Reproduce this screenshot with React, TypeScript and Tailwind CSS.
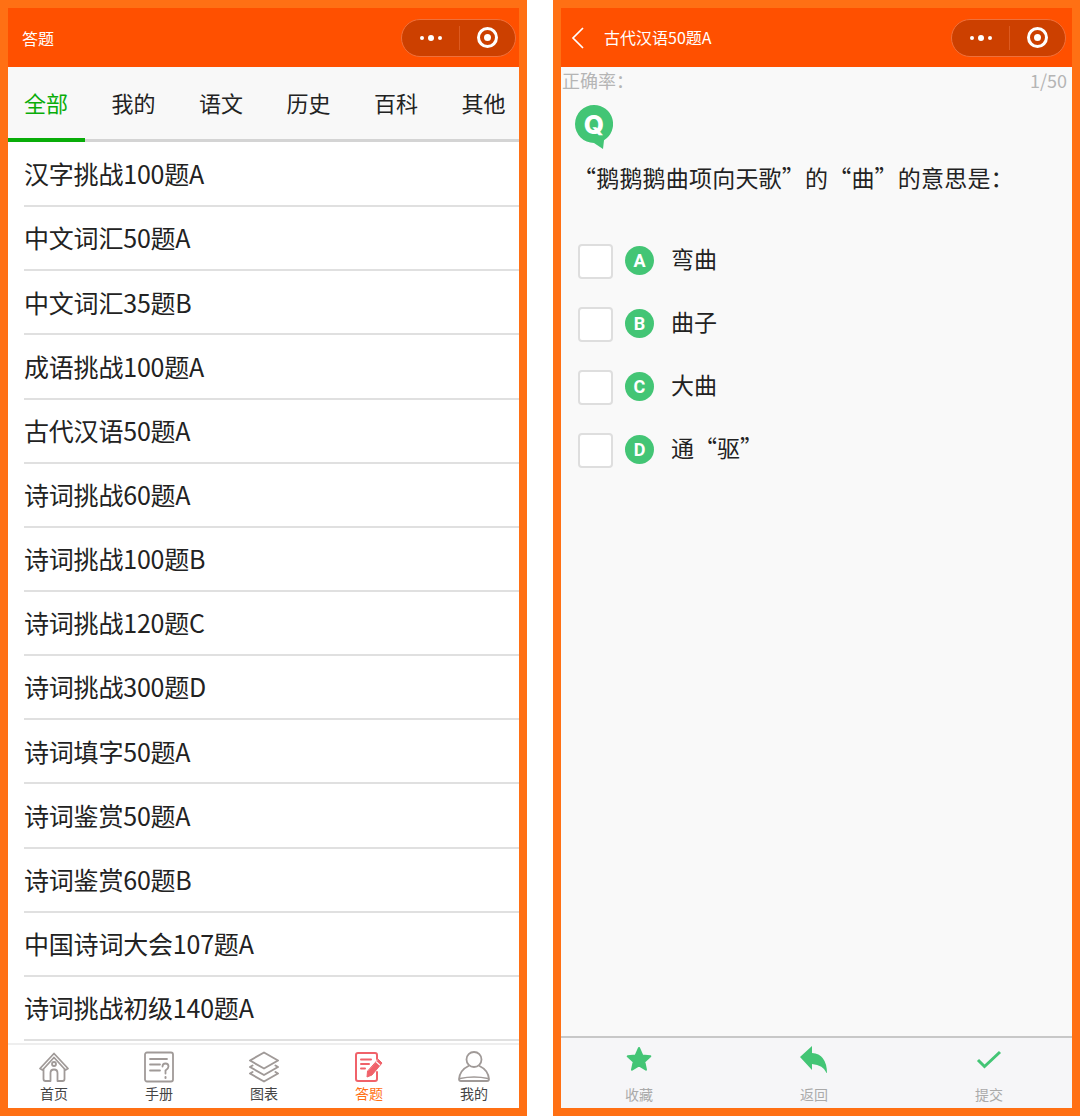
import { ReactNode } from 'react'

const cjk = "font-['Noto_Sans_CJK_SC','Noto_Sans',sans-serif]"

const tabs = ['全部', '我的', '语文', '历史', '百科', '其他']

const quizzes = [
  '汉字挑战100题A',
  '中文词汇50题A',
  '中文词汇35题B',
  '成语挑战100题A',
  '古代汉语50题A',
  '诗词挑战60题A',
  '诗词挑战100题B',
  '诗词挑战120题C',
  '诗词挑战300题D',
  '诗词填字50题A',
  '诗词鉴赏50题A',
  '诗词鉴赏60题B',
  '中国诗词大会107题A',
  '诗词挑战初级140题A',
]

const options = [
  { letter: 'A', text: '弯曲' },
  { letter: 'B', text: '曲子' },
  { letter: 'C', text: '大曲' },
  { letter: 'D', text: '通“驱”' },
]

function Capsule() {
  return (
    <div className="flex h-[38px] w-[115px] items-center rounded-full border border-[#f0703a] bg-[#cc4000]">
      <div className="flex w-[57px] items-center justify-center gap-[4px]">
        <span className="size-[4px] rounded-full bg-white" />
        <span className="size-[6px] rounded-full bg-white" />
        <span className="size-[4px] rounded-full bg-white" />
      </div>
      <div className="h-[24px] w-px bg-[#dd5a20]" />
      <div className="flex flex-1 items-center justify-center">
        <div className="flex size-[21px] items-center justify-center rounded-full border-[3px] border-white">
          <span className="size-[7px] rounded-full bg-white" />
        </div>
      </div>
    </div>
  )
}

function Phone({ children }: { children: ReactNode }) {
  return (
    <div className={`flex h-[1116px] w-[527px] flex-col overflow-hidden border-8 border-[#ff7014] ${cjk}`}>
      {children}
    </div>
  )
}

function HomeIcon() {
  return (
    <svg width="32" height="32" viewBox="0 0 32 32" fill="none" stroke="#a09a98" strokeWidth="1.8" strokeLinejoin="round" strokeLinecap="round">
      <path d="M2 17.500 16 2.500l14 15-2.500 1.500L16 6.500 4.500 19Z" />
      <path d="M5.500 18.500V28q0 2 2 2h5v-8q0-3.500 3.500-3.500t3.500 3.500v8h5q2 0 2-2V18.500" />
      <circle cx="16" cy="13" r="2" />
    </svg>
  )
}

function ManualIcon() {
  return (
    <svg width="30" height="32" viewBox="0 0 30 32" fill="none" stroke="#a09a98" strokeWidth="1.8" strokeLinecap="round">
      <rect x="1" y="1.500" width="28" height="29" rx="2" />
      <path d="M6 8h17M6 13.500h10M6 19.500h10" />
      <path d="M18.500 15.500q0-3 3-3t3 3q0 2-3 4v3" />
      <path d="M21.500 26v1" strokeWidth="2" />
    </svg>
  )
}

function LayersIcon() {
  return (
    <svg width="32" height="32" viewBox="0 0 32 32" fill="none" stroke="#a09a98" strokeWidth="2" strokeLinejoin="round" strokeLinecap="round">
      <path d="M16 1.500 30 9.500 16 17.500 2 9.500Z" />
      <path d="M4.500 14.500 2 16l14 8 14-8-2.500-1.500" />
      <path d="M4.500 21 2 22.500l14 8 14-8-2.500-1.500" />
    </svg>
  )
}

function QuizIcon() {
  return (
    <svg width="28" height="30" viewBox="0 0 28 30" fill="none" stroke="#f0626a" strokeWidth="2" strokeLinecap="round" strokeLinejoin="round">
      <path d="M22 7V3q0-2-2-2H3Q1 1 1 3v24q0 2 2 2h17q2 0 2-2v-7" />
      <path d="M6 7.500h10M6 12h8M6 16.500h4" />
      <path d="M23.500 7.500 27 11 17 23l-5 2 .5-5.500Z" fill="#f0626a" stroke="#f0626a" strokeWidth="1" />
      <path d="M21.500 10l3 2.800" stroke="#fff" strokeWidth="1.200" />
    </svg>
  )
}

function UserIcon() {
  return (
    <svg width="32" height="32" viewBox="0 0 32 32" fill="none" stroke="#a09a98" strokeWidth="1.8" strokeLinecap="round">
      <circle cx="16" cy="8.500" r="7.500" />
      <path d="M10.500 15q-8.500 4-9.500 13q0 2 2 2h26q2 0 2-2q-1-9-9.500-13" />
      <path d="M2 27.500q14-3 28 0" strokeWidth="1.400" />
    </svg>
  )
}

const navItems = [
  { label: '首页', icon: <HomeIcon />, active: false },
  { label: '手册', icon: <ManualIcon />, active: false },
  { label: '图表', icon: <LayersIcon />, active: false },
  { label: '答题', icon: <QuizIcon />, active: true },
  { label: '我的', icon: <UserIcon />, active: false },
]

function ListPage() {
  return (
    <Phone>
      <div className="flex h-[59px] shrink-0 items-center justify-between bg-[#ff5000] pl-[14px] pr-[3px]">
        <span className="text-[16px] text-white">答题</span>
        <Capsule />
      </div>
      <div className="flex h-[75px] shrink-0 gap-[10.5px] border-b-[3px] border-[#d4d4d4] bg-[#f8f8f8]">
        {tabs.map((t, i) => (
          <div
            key={t}
            className={`-mb-[3px] flex h-[75px] w-[77px] shrink-0 items-center justify-center pr-[1px] text-[22px] ${
              i === 0 ? 'border-b-[4px] border-[#09ad09] pb-[1px] text-[#09ad09]' : 'pb-[5px] text-[#222]'
            }`}
          >
            {t}
          </div>
        ))}
      </div>
      <div className="min-h-0 flex-1 overflow-hidden bg-white pl-[16px] pt-[1px]">
        {quizzes.map((q) => (
          <div key={q} className="flex h-[64.15px] items-center border-b-2 border-[#e0e0e0] text-[25px] tracking-[-0.2px] text-[#222]">
            {q}
          </div>
        ))}
      </div>
      <div className="flex h-[65px] shrink-0 justify-between border-t-2 border-[#eee] bg-white pl-[21px] pr-[20px] pt-[6px]">
        {navItems.map((n) => (
          <div key={n.label} className="flex w-[50px] flex-col items-center">
            <div className="flex h-[32px] items-center">{n.icon}</div>
            <span className={`text-[14px] leading-[20px] ${n.active ? 'text-[#ff7014]' : 'text-[#444]'}`}>{n.label}</span>
          </div>
        ))}
      </div>
    </Phone>
  )
}

function QuizPage() {
  return (
    <Phone>
      <div className="flex h-[59px] shrink-0 items-center justify-between bg-[#ff5000] pr-[6px]">
        <div className="flex items-center">
          <svg className="ml-[10px]" width="14" height="22" viewBox="0 0 14 22" fill="none" stroke="#fff" strokeWidth="1.700">
            <path d="M12 1 2 11l10 10" />
          </svg>
          <span className="ml-[19px] -mt-[1px] text-[16px] text-white">古代汉语50题A</span>
        </div>
        <Capsule />
      </div>
      <div className="flex flex-1 flex-col bg-[#f9f9f9]">
        <div className="flex justify-between pl-[1px] pr-[5px] pt-[1px] text-[18px] leading-[24px] text-[#b5b5b5]">
          <span>正确率：</span>
          <span>1/50</span>
        </div>
        <svg className="ml-[14px] mt-[13px]" width="38" height="44" viewBox="0 0 38 44" fill="none">
          <path d="M19 0a19 19 0 0 1 10 35.200L28 44l-9-6A19 19 0 0 1 19 0Z" fill="#43c575" />
          <text x="19" y="29" textAnchor="middle" fontFamily="Inter, sans-serif" fontWeight="800" fontSize="26" fill="#fff">
            Q
          </text>
        </svg>
        <p className="ml-[12px] mt-[12px] text-[23px] leading-[32px] tracking-[0.2px] text-[#222]">“鹅鹅鹅曲项向天歌”的“曲”的意思是：</p>
        <div className="ml-[17px] mt-[51px] flex flex-col gap-[28px]">
          {options.map((o) => (
            <div key={o.letter} className="flex h-[35px] items-center">
              <div className="size-[35px] rounded-[4px] border-2 border-[#dedede] bg-white" />
              <div className="ml-[12px] -mt-[2px] flex size-[29px] items-center justify-center rounded-full bg-[#43c575] font-['Roboto',sans-serif] text-[18px] font-bold text-white">
                {o.letter}
              </div>
              <span className="ml-[17px] pb-[6px] text-[23px] text-[#222]">{o.text}</span>
            </div>
          ))}
        </div>
      </div>
      <div className="flex h-[72px] shrink-0 gap-[115px] border-t-2 border-[#c8c8c8] bg-[#f6f6f8] pl-[48px] pt-[7px]">
        <div className="flex w-[60px] flex-col items-center">
          <svg width="28" height="28" viewBox="0 0 28 28" fill="#43c575" stroke="#43c575" strokeWidth="2" strokeLinejoin="round">
            <path d="M14 3l3.300 7.500 8 .8-6 5.400 1.700 8L14 20.500 7 24.700l1.700-8-6-5.400 8-.8Z" />
          </svg>
          <span className="mt-[10px] text-[14px] leading-[22px] text-[#aaa]">收藏</span>
        </div>
        <div className="flex w-[60px] flex-col items-center">
          <svg width="30" height="28" viewBox="0 0 30 28" fill="#43c575">
            <path d="M1 12 13 1v7q15 1 15 21-3-9-15-10v6Z" />
          </svg>
          <span className="mt-[10px] text-[14px] leading-[22px] text-[#aaa]">返回</span>
        </div>
        <div className="flex w-[60px] flex-col items-center">
          <svg width="28" height="28" viewBox="0 0 28 28" fill="none" stroke="#43c575" strokeWidth="3">
            <path d="M3 15l6.500 6.500L25 7" />
          </svg>
          <span className="mt-[10px] text-[14px] leading-[22px] text-[#aaa]">提交</span>
        </div>
      </div>
    </Phone>
  )
}

export default function App() {
  return (
    <div className="flex h-[1116px] w-[1080px] justify-between overflow-hidden bg-white">
      <ListPage />
      <QuizPage />
    </div>
  )
}
